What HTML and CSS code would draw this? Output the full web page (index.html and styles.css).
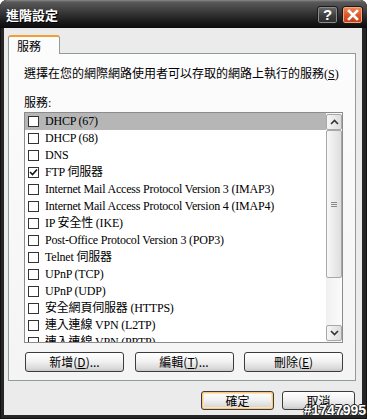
FILE: index.html
```html
<!DOCTYPE html>
<html lang="zh-Hant">
<head>
<meta charset="utf-8">
<title>進階設定</title>
<link rel="stylesheet" href="styles.css">
</head>
<body>
<div class="window">
  <div class="titlebar">
    <span class="title">進階設定</span>
    <div class="tb-buttons">
      <span class="tb-btn help">?</span>
      <span class="tb-btn close">
        <svg width="12" height="12" viewBox="0 0 12 12"><path d="M2 2 L10 10 M10 2 L2 10" stroke="#fff" stroke-width="2.6" stroke-linecap="square"/></svg>
      </span>
    </div>
  </div>
  <div class="client">
    <div class="tabs"><div class="tab">服務</div></div>
    <div class="panel">
      <div class="desc">選擇在您的網際網路使用者可以存取的網路上執行的服務(<u>S</u>)</div>
      <div class="label">服務:</div>
      <div class="listbox">
        <div class="items">
          <div class="item sel"><span class="cb"></span>DHCP (67)</div>
          <div class="item"><span class="cb"></span>DHCP (68)</div>
          <div class="item"><span class="cb"></span>DNS</div>
          <div class="item"><span class="cb"><svg width="9" height="9" viewBox="0 0 9 9"><path d="M1 4 L3.5 6.5 L8 1.5" stroke="#111" stroke-width="1.6" fill="none"/></svg></span>FTP 伺服器</div>
          <div class="item"><span class="cb"></span>Internet Mail Access Protocol Version 3 (IMAP3)</div>
          <div class="item"><span class="cb"></span>Internet Mail Access Protocol Version 4 (IMAP4)</div>
          <div class="item"><span class="cb"></span>IP 安全性 (IKE)</div>
          <div class="item"><span class="cb"></span>Post-Office Protocol Version 3 (POP3)</div>
          <div class="item"><span class="cb"></span>Telnet 伺服器</div>
          <div class="item"><span class="cb"></span>UPnP (TCP)</div>
          <div class="item"><span class="cb"></span>UPnP (UDP)</div>
          <div class="item"><span class="cb"></span>安全網頁伺服器 (HTTPS)</div>
          <div class="item"><span class="cb"></span>連入連線 VPN (L2TP)</div>
          <div class="item"><span class="cb"></span>連入連線 VPN (PPTP)</div>
        </div>
        <div class="scrollbar">
          <div class="sb-btn">
            <svg width="9" height="6" viewBox="0 0 9 6"><path d="M1 5 L4.5 1.5 L8 5" stroke="#333" stroke-width="1.6" fill="none"/></svg>
          </div>
          <div class="sb-track">
            <div class="sb-thumb"><span class="grip"></span></div>
          </div>
          <div class="sb-btn">
            <svg width="9" height="6" viewBox="0 0 9 6"><path d="M1 1 L4.5 4.5 L8 1" stroke="#333" stroke-width="1.6" fill="none"/></svg>
          </div>
        </div>
      </div>
      <div class="btn-row">
        <button class="btn wide">新增(<u>D</u>)...</button>
        <button class="btn wide">編輯(<u>T</u>)...</button>
        <button class="btn wide">刪除(<u>E</u>)</button>
      </div>
    </div>
    <div class="footer">
      <button class="btn dlg default">確定</button>
      <button class="btn dlg">取消</button>
    </div>
  </div>
  <div class="watermark">#1747995</div>
</div>
</body>
</html>
```
FILE: styles.css
```css
* { box-sizing: border-box; }
html, body { margin: 0; padding: 0; background: #ffffff; }
body { font-family: "Liberation Serif", "Noto Sans CJK TC", serif; font-size: 12px; color: #000; }

.window {
  position: relative;
  width: 367px;
  height: 419px;
  display: flex;
  flex-direction: column;
  background: #262626;
  border-radius: 7px 7px 0 0;
  overflow: hidden;
  box-shadow: inset 0 0 0 1px #111;
}

.titlebar {
  flex: none;
  height: 28px;
  display: flex;
  align-items: center;
  justify-content: space-between;
  padding: 0 4px 0 6px;
  background: linear-gradient(#8a8a8a 0, #5a5a5a 2px, #3c3c3c 40%, #1c1c1c 75%, #0c0c0c 100%);
}
.title {
  font-family: "Noto Sans CJK TC", sans-serif;
  font-weight: bold;
  font-size: 13px;
  color: #fff;
  text-shadow: 1px 1px 0 #000;
  margin-top: 1px;
}
.tb-buttons { display: flex; gap: 4px; margin-top: 1px; }
.tb-btn {
  width: 21px;
  height: 18px;
  border-radius: 3px;
  display: flex;
  align-items: center;
  justify-content: center;
  border: 1px solid #1a1a1a;
}
.help {
  background: linear-gradient(#6c6c6c, #3e3e3e 55%, #2c2c2c);
  color: #fff;
  font-family: "Liberation Sans", sans-serif;
  font-weight: bold;
  font-size: 15px;
  box-shadow: inset 0 0 0 1px #8a8a8a;
}
.close {
  background: linear-gradient(#f08a5a, #e0562a 50%, #c43c16);
  box-shadow: inset 0 0 0 1px #f4a882;
}

.client {
  flex: 1;
  margin: 0 5px 4px 4px;
  background: #ebebeb;
  display: flex;
  flex-direction: column;
  padding: 7px 7px 0 4px;
}

.tabs { display: flex; height: 18px; position: relative; z-index: 1; }
.tab {
  width: 52px;
  height: 19px;
  padding-left: 8px;
  line-height: 17px;
  font-family: "Noto Sans CJK TC", sans-serif;
  font-size: 12px;
  background: #fcfcfc;
  border: 1px solid #919b9c;
  border-bottom: none;
  border-top: 2px solid #f0a030;
  border-radius: 3px 3px 0 0;
}

.panel {
  width: 348px;
  height: 328px;
  border: 1px solid #919b9c;
  background: linear-gradient(#fcfcfc, #f4f4f4);
  padding: 13px 12px 0 15px;
  display: flex;
  flex-direction: column;
}
.desc {
  height: 14px;
  line-height: 14px;
  font-size: 12px;
  white-space: nowrap;
}
.label {
  margin-top: 15px;
  height: 14px;
  line-height: 14px;
}

.listbox {
  margin-top: 2px;
  width: 319px;
  height: 231px;
  border: 1px solid #8c8c8c;
  background: #fff;
  display: flex;
  overflow: hidden;
}
.items { flex: 1; overflow: hidden; }
.item {
  height: 17px;
  display: flex;
  align-items: center;
  padding-left: 3px;
  white-space: nowrap;
  font-size: 12px;
  line-height: 17px;
  letter-spacing: -0.2px;
}
.item.sel { background: #b6b6b6; }
.cb {
  flex: none;
  width: 11px;
  height: 11px;
  border: 1px solid #333;
  background: #fff;
  margin-right: 6px;
  display: flex;
  align-items: center;
  justify-content: center;
}

.scrollbar {
  flex: none;
  width: 16px;
  display: flex;
  flex-direction: column;
  background: linear-gradient(90deg, #f0f0f0, #fbfbfb);
  padding: 1px 0;
}
.sb-btn {
  height: 16px;
  border: 1px solid #a8a8a8;
  border-radius: 2px;
  background: linear-gradient(90deg, #f6f6f6, #dcdcdc);
  display: flex;
  align-items: center;
  justify-content: center;
}
.sb-track { flex: 1; display: flex; flex-direction: column; }
.sb-thumb {
  height: 148px;
  border: 1px solid #a8a8a8;
  border-radius: 2px;
  background: linear-gradient(90deg, #f8f8f8, #dedede);
  display: flex;
  align-items: center;
  justify-content: center;
}
.grip {
  width: 6px;
  height: 5px;
  border-top: 1px solid #8a8a8a;
  border-bottom: 1px solid #8a8a8a;
  position: relative;
}
.grip::after {
  content: "";
  position: absolute;
  left: 0; right: 0; top: 1px;
  border-top: 1px solid #8a8a8a;
}

.btn-row {
  margin-top: 9px;
  width: 319px;
  display: flex;
  justify-content: space-between;
  padding-left: 1px;
}
.btn {
  font-family: "Noto Sans CJK TC", sans-serif;
  font-size: 12px;
  height: 20px;
  padding: 0;
  line-height: 16px;
  color: #000;
  border: 1px solid #3c3c3c;
  border-radius: 3px;
  background: linear-gradient(#ffffff, #f2f2f2 45%, #dadada 85%, #c8c8c8);
}
.btn u { text-decoration: underline; }
.btn.wide { width: 99px; }

.footer {
  display: flex;
  justify-content: flex-end;
  gap: 8px;
  margin-top: 10px;
}
.btn.dlg { width: 73px; height: 19px; }
.btn.default {
  box-shadow: inset 0 0 0 1px #f6c880, inset 0 0 0 2px #fde2b8;
}

.watermark {
  position: absolute;
  right: 1px;
  bottom: 1px;
  font-family: "Liberation Sans", sans-serif;
  font-weight: bold;
  font-size: 14px;
  line-height: 15px;
  color: #fff;
  text-shadow: -1px 0 #222, 1px 0 #222, 0 -1px #222, 0 1px #222, 1px 1px #222;
}
```
